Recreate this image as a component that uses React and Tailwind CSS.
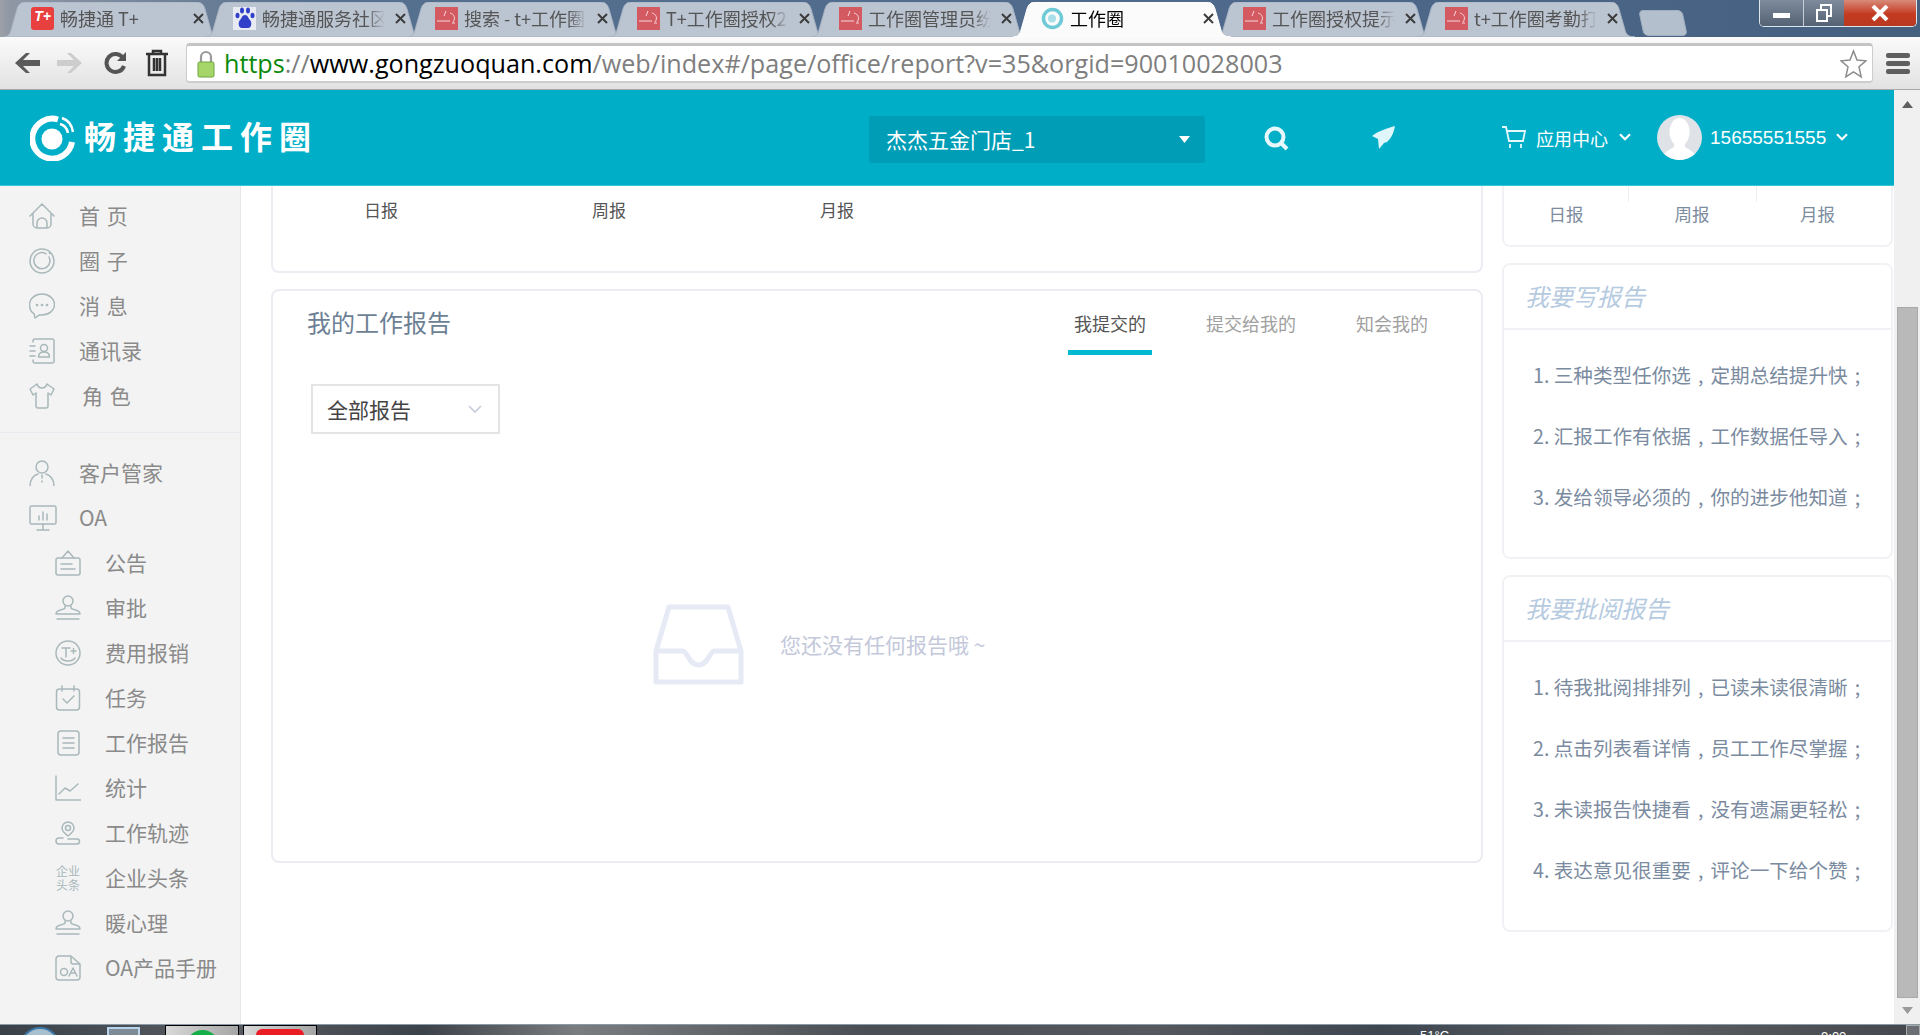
const S = ({ children, w = 26, h = 26, vb = "0 0 26 26", c = "#a9b8ba", sw = 1.5 }) => (
  <svg width={w} height={h} viewBox={vb} fill="none" stroke={c} strokeWidth={sw} strokeLinecap="round" strokeLinejoin="round" className="shrink-0">{children}</svg>
);

const icons = {
  home: <S><path d="M1 13 13 1l12 12M4 11v10a4 4 0 0 0 4 4h10a4 4 0 0 0 4-4V11M8 25v-5a5 5 0 0 1 10 0v5" /></S>,
  circle: <S><circle cx="13" cy="13" r="12" /><path d="M20 9a8 8 0 1 1-3-3.200" /><circle cx="21" cy="5" r=".6" /></S>,
  chat: <S><path d="M13 1c7 0 12.500 4.700 12.500 10.500S20 22 13 22c-1 0-1.500 0-2.500-.2L6 25c-.5-1.500-.5-3-.8-4.200C2 19 .5 15.500.5 11.500.5 5.700 6 1 13 1Z" /><circle cx="8" cy="12" r=".6" /><circle cx="13" cy="12" r=".6" /><circle cx="18" cy="12" r=".6" /></S>,
  book: <S><path d="M4 4V3a2 2 0 0 1 2-2h17a2 2 0 0 1 2 2v20a2 2 0 0 1-2 2H6a2 2 0 0 1-2-2v-1M1 8h5M1 13h5M1 18h5" /><circle cx="15" cy="10" r="3.500" /><path d="M9.500 19c0-3 2-5 5.500-5s5.500 2 5.500 5Z" /></S>,
  shirt: <S><path d="M8 1 1 6l3 6 3-2v13a2 2 0 0 0 2 2h8a2 2 0 0 0 2-2V10l3 2 3-6-7-5c-1 3-3 4-5 4S9 4 8 1Z" /></S>,
  person: <S><circle cx="13" cy="7" r="6" /><path d="M1 26c0-7 4-11 8-12M25 26c0-7-4-11-8-12M13 15v3M13 21v1" /></S>,
  monitor: <S w={28} vb="0 0 28 26"><rect x="1" y="1" width="26" height="18" rx="1.500" /><path d="M14 19v6M8 25h12M10 15v-4M14 15V7M18 15v-6" /></S>,
  notice: <S><rect x="1" y="8" width="24" height="17" rx="2" /><path d="M7 8 13 1l6 7M6 14h11M6 19h14" /></S>,
  stamp: <S><circle cx="13" cy="6" r="5" /><path d="M10 11v2c0 2-9 1-9 6h24c0-5-9-4-9-6v-2M2 24h22" /></S>,
  tplus: <S><circle cx="13" cy="13" r="12" /><path d="M7 8h8M11 8v9M16 11h5M18.500 8.500v5M6 18c3 4 11 4 14 0" /></S>,
  task: <S><rect x="1.500" y="4" width="23" height="21" rx="3" /><path d="M7 1v5M19 1v5M8 14l4 4 7-7" /></S>,
  report: <S><rect x="3" y="1" width="21" height="24" rx="3" /><path d="M8 8h11M8 13h11M8 18h11" /></S>,
  chart: <S><path d="M1 1v24h25M4 19l6-6 5 3 8-7" /></S>,
  pin: <S><path d="M13 16c-4-3-6-5-6-8a6 6 0 1 1 12 0c0 3-2 5-6 8Z" /><circle cx="13" cy="8" r="2.500" /><path d="M8 18H4a3 3 0 0 0 0 6h18a2.500 2.500 0 0 0 0-5h-9" /></S>,
  oa: <S><path d="M16 1H4a3 3 0 0 0-3 3v18a3 3 0 0 0 3 3h18a3 3 0 0 0 3-3V9Zm0 0v6a2 2 0 0 0 2 2h7" /><circle cx="9" cy="17" r="3.500" /><path d="m14 21 4-8 4 8M15.500 18h5" /></S>,
};

const MenuRow = ({ icon, label, sub, extra }) => (
  <div className={`flex h-[45px] items-center ${sub ? "pl-[55px] gap-[24px]" : "pl-[29px] gap-[24px]"}`}>
    {icon}
    <span className={`whitespace-nowrap text-[21px] leading-none text-[#8a8a8a] [word-spacing:2px] ${extra || ""}`}>{label}</span>
  </div>
);

const FaviconRed = () => (
  <div className="w-[23px] h-[23px] shrink-0 bg-[#d45a62] flex items-center justify-center">
    <svg width="21" height="16" viewBox="0 0 21 16" fill="none" stroke="#f6d8da" strokeWidth="1"><path d="M1 11h13M14 3c4 1 6 5 3 9M10 1 8 6M16 13h3" /></svg>
  </div>
);

const FaviconT = () => (
  <div className="w-[23px] h-[23px] shrink-0 rounded-[3px] bg-[#e8403e] flex items-start justify-center text-white text-[14px] font-bold italic leading-[19px] [font-family:'Liberation_Sans',sans-serif]">T+</div>
);

const FaviconBaidu = () => (
  <div className="w-[23px] h-[23px] shrink-0 bg-[#e8ebf2] flex items-center justify-center">
    <svg width="20" height="22" viewBox="0 0 20 22" fill="#3040c8"><ellipse cx="7" cy="3.500" rx="2" ry="3" /><ellipse cx="13" cy="3.500" rx="2" ry="3" /><ellipse cx="2.500" cy="8.500" rx="2" ry="2.800" /><ellipse cx="17.500" cy="8.500" rx="2" ry="2.800" /><path d="M10 8c-3 0-3 3-5 5s-2 8 2 8h6c4 0 4-6 2-8s-2-5-5-5Z" /></svg>
  </div>
);

const FaviconApp = () => (
  <svg width="23" height="23" viewBox="0 0 23 23" fill="none" className="shrink-0"><circle cx="11.500" cy="11.500" r="9" stroke="#6ecad6" strokeWidth="3.500" /><circle cx="11" cy="11.500" r="4" fill="#a9dfe7" /></svg>
);

const tabs = [
  { icon: <FaviconT />, t: "畅捷通 T+" },
  { icon: <FaviconBaidu />, t: "畅捷通服务社区" },
  { icon: <FaviconRed />, t: "搜索 - t+工作圈" },
  { icon: <FaviconRed />, t: "T+工作圈授权2" },
  { icon: <FaviconRed />, t: "工作圈管理员纷" },
  { icon: <FaviconApp />, t: "工作圈", active: true },
  { icon: <FaviconRed />, t: "工作圈授权提示" },
  { icon: <FaviconRed />, t: "t+工作圈考勤打" },
];

const Tab = ({ icon, t, active }) => (
  <div className={`relative w-[202px] h-[35px] shrink-0 flex items-center pl-[20px] pb-[3px] ${active ? "z-10" : ""}`}>
    <svg width="218" height="35" viewBox="0 0 218 35" className="absolute left-[-8px] top-0">
      <path d="M0 35c5 0 7-3 8-7l6-21c1-4 4-7 8-7h172c4 0 7 3 8 7l6 21c1 4 3 7 10 7Z" fill={active ? "#fbfbfb" : "#bbc4d1"} stroke={active ? "#ffffff" : "#a7b2c2"} strokeWidth="1" />
    </svg>
    <div className="relative flex items-center w-full">
      {icon}
      <span className={`ml-[6px] w-[123px] overflow-hidden whitespace-nowrap text-[18px] leading-[24px] [mask-image:linear-gradient(90deg,#000_85%,transparent)] ${active ? "text-black" : "text-[#555]"}`}>{t}</span>
      <svg width="11" height="11" viewBox="0 0 11 11" stroke="#3c3c3c" strokeWidth="2" className="ml-[10px] shrink-0"><path d="m1 1 9 9M10 1l-9 9" /></svg>
    </div>
  </div>
);

const Title = ({ children }) => (
  <div className="h-[65px] border-b-2 border-[#f1f2f5] pl-[21px] pb-[2px] flex items-center">
    <span className="italic text-[24px] leading-none text-[#b6cae0]">{children}</span>
  </div>
);

const Line = ({ n, a, b }) => (
  <div className="h-[61px] leading-[61px] whitespace-nowrap text-[19.6px] text-[#7b8b9f]">
    {n}. {a}<span className="inline-block w-[19.600px] text-center">,</span>{b}<span className="inline-block w-[19.600px] text-center">;</span>
  </div>
);

const Tip = ({ title, items }) => (
  <div className="mt-[16px] rounded-[8px] border-2 border-[#f1f2f5] bg-white">
    <Title>{title}</Title>
    <div className="pt-[14px] pb-[30px] pl-[29px]">
      {items.map((x, i) => <Line key={i} n={i + 1} a={x[0]} b={x[1]} />)}
    </div>
  </div>
);

const Chevron = ({ c = "#fff", w = 12 }) => (
  <svg width={w} height={w * 0.7} viewBox="0 0 12 8" fill="none" stroke={c} strokeWidth="2.200"><path d="m1 1 5 5 5-5" /></svg>
);

export default function App() {
  return (
    <div className="w-[1920px] h-[1035px] overflow-hidden flex flex-col bg-white [font-family:'Noto_Sans_CJK_SC','Noto_Sans',sans-serif]">
      {/* tab strip */}
      <div className="h-[37px] shrink-0 flex items-start justify-between bg-[linear-gradient(90deg,#9da1a8_0,#8f97a5_10px,#56708f_16%,#4f6a8c_60%,#45607f_100%)] overflow-hidden">
        <div className="flex pt-[2px] pl-[11px]">
          {tabs.map((t, i) => <Tab key={i} {...t} />)}
          <div className="ml-[14px] mt-[8px] w-[44px] h-[26px] rounded-[5px] skew-x-[12deg] bg-[#b4bfce] border border-[#a3afc0]" />
        </div>
        <div className="mr-[3px] flex h-[27px] w-[158px] rounded-b-[5px] border border-t-0 border-[#dfe5ec] overflow-hidden">
          <div className="w-[44px] flex items-end justify-center pb-[8px] bg-[linear-gradient(180deg,#7f8b9c,#536274)] border-r border-[#c5ccd5]"><div className="w-[17px] h-[5px] bg-white" /></div>
          <div className="w-[40px] flex items-center justify-center bg-[linear-gradient(180deg,#7f8b9c,#536274)]">
            <svg width="18" height="18" viewBox="0 0 18 18" fill="none" stroke="#fff" strokeWidth="2"><rect x="2" y="6" width="10" height="11" /><path d="M6 5V1h10v11h-3" /></svg>
          </div>
          <div className="flex-1 flex items-center justify-center bg-[linear-gradient(180deg,#d88a7a,#c43a20_55%,#b93a22)]">
            <svg width="20" height="16" viewBox="0 0 20 16" stroke="#fff" strokeWidth="4"><path d="m3 1 14 14M17 1 3 15" /></svg>
          </div>
        </div>
      </div>

      {/* browser toolbar */}
      <div className="h-[53px] shrink-0 flex items-center border-b border-[#a8a8a8] bg-[linear-gradient(180deg,#fafafa,#ececec_60%,#e2e2e2)]">
        <div className="ml-[15px] flex items-center">
          <svg width="25" height="22" viewBox="0 0 25 22" fill="#5b5b5b"><path d="M0 11 11 1h4l-7 7h17v6H8l7 7h-4Z" /></svg>
          <svg width="25" height="22" viewBox="0 0 25 22" fill="#cdcdcd" className="ml-[17px]"><path d="M25 11 14 1h-4l7 7H0v6h17l-7 7h4Z" /></svg>
          <svg width="23" height="24" viewBox="0 0 23 24" fill="none" stroke="#555" strokeWidth="4" className="ml-[22px]"><path d="M19 7a9 9 0 1 0 1 8" /><path d="M22 1v9h-9Z" fill="#555" stroke="none" /></svg>
          <svg width="24" height="28" viewBox="0 0 24 28" fill="none" stroke="#333" strokeWidth="2.500" className="ml-[18px]"><path d="M1 5h22M8 5V2h8v3M4 5v21h16V5M9 9v13M12 9v13M15 9v13" /></svg>
        </div>
        <div className="ml-[17px] w-[1687px] h-[40px] flex items-center rounded-[4px] border border-[#cdcdcd] border-t-[3px] border-t-[#c4c4c4] border-b-2 bg-white">
          <svg width="18" height="28" viewBox="0 0 18 28" className="ml-[10px] shrink-0"><path d="M4 12V7a5 5 0 0 1 10 0v5" fill="none" stroke="#9a9a9a" strokeWidth="2.200" /><rect x="1" y="12" width="16" height="15" rx="1.500" fill="#a6d66a" stroke="#6fa53a" /></svg>
          <span className="ml-[9px] whitespace-nowrap text-[25.16px] leading-none text-[#7e7e7e] [font-family:'Open_Sans',sans-serif]">
            <span className="text-[#0a8a0a]">https</span>://<span className="text-black">www.gongzuoquan.com</span>/web/index#/page/office/report?v=35&amp;orgid=90010028003
          </span>
          <svg width="27" height="30" viewBox="0 0 27 30" fill="#fff" stroke="#8c8c8c" strokeWidth="1.500" className="ml-auto mr-[5px] shrink-0"><path d="m13.500 2 3.500 9 9 .8-7 6 2.200 10-7.700-5-7.700 5L8 17.800l-7-6 9-.8Z" /></svg>
        </div>
        <div className="ml-[13px] flex flex-col gap-[3px]">
          <div className="w-[24px] h-[5px] rounded-[2px] bg-[#5e5e5e]" />
          <div className="w-[24px] h-[5px] rounded-[2px] bg-[#5e5e5e]" />
          <div className="w-[24px] h-[5px] rounded-[2px] bg-[#5e5e5e]" />
        </div>
      </div>

      {/* page */}
      <div className="h-[934px] shrink-0 flex">
        <div className="w-[1894px] flex flex-col">
          {/* teal header */}
          <div className="h-[96px] shrink-0 flex items-center bg-[#00aec8] border-b border-[#3cc6da]">
            <svg width="46" height="46" viewBox="0 0 46 46" fill="none" className="ml-[30px] shrink-0">
              <path d="M28 4.500A20 20 0 1 0 42 27" stroke="#fff" strokeWidth="6" />
              <circle cx="22" cy="24" r="10.500" fill="#fff" />
              <path d="M32 3c6 2 10 7 11 14M30 9c4 1 7 4 8 9" stroke="#fff" strokeWidth="2.500" />
            </svg>
            <span className="ml-[8px] mb-[5px] whitespace-nowrap text-[32px] leading-none font-bold tracking-[7px] text-white">畅捷通工作圈</span>
            <div className="ml-[551px] mt-[4px] w-[336px] h-[47px] flex items-center justify-between pl-[17px] pr-[15px] rounded-[2px] bg-[#009db6]">
              <span className="text-[21px] leading-none text-white">杰杰五金门店_1</span>
              <svg width="11" height="7" viewBox="0 0 11 7" fill="#fff"><path d="M0 0h11L5.500 7Z" /></svg>
            </div>
            <svg width="26" height="26" viewBox="0 0 26 26" fill="none" stroke="#e6f8fb" strokeWidth="4" className="ml-[58px]"><circle cx="12" cy="12" r="8.500" /><path d="m18 18 6 6" /></svg>
            <svg width="24" height="25" viewBox="0 0 24 25" className="ml-[83px] mb-[-1px]"><path d="M23 0C16 2 6 5 0 10l6 3 1 10 5-6 3-1c5-4 7-11 8-16Z" fill="#dff6fa" /></svg>
            <svg width="24" height="23" viewBox="0 0 24 23" fill="none" stroke="#e6f8fb" strokeWidth="1.800" className="ml-[106px]"><path d="M0 1h4l3 14h14l2-10H5M8 18v4M19 18v4" /></svg>
            <span className="ml-[10px] whitespace-nowrap text-[18px] leading-none text-white">应用中心</span>
            <span className="ml-[11px]"><Chevron /></span>
            <div className="ml-[26px] w-[45px] h-[45px] rounded-full bg-[#dfe3e8] overflow-hidden flex justify-center shrink-0">
              <svg width="45" height="45" viewBox="0 0 45 45"><ellipse cx="22.500" cy="17" rx="10" ry="14" fill="#fff" /><path d="M17 26v6c-4 3-10 4-12 13h35c-2-9-8-10-12-13v-6Z" fill="#fff" /></svg>
            </div>
            <span className="ml-[8px] whitespace-nowrap text-[19px] leading-none text-white [font-family:'Liberation_Sans',sans-serif]">15655551555</span>
            <span className="ml-[10px]"><Chevron /></span>
          </div>

          {/* sidebar + content */}
          <div className="flex h-[838px]">
            <div className="w-[241px] shrink-0 bg-[#f3f3f3] border-r border-[#e6e6e6]">
              <div className="pt-[7px] pb-[14px] border-b border-[#e9ebf0]">
                <MenuRow icon={icons.home} label="首 页" />
                <MenuRow icon={icons.circle} label="圈 子" />
                <MenuRow icon={icons.chat} label="消 息" />
                <MenuRow icon={icons.book} label="通讯录" />
                <MenuRow icon={icons.shirt} label="角 色" extra="ml-[3px]" />
              </div>
              <div className="pt-[17px]">
                <MenuRow icon={icons.person} label="客户管家" />
                <MenuRow icon={icons.monitor} label="OA" extra="-ml-[2px]" />
                <MenuRow sub icon={icons.notice} label="公告" />
                <MenuRow sub icon={icons.stamp} label="审批" />
                <MenuRow sub icon={icons.tplus} label="费用报销" />
                <MenuRow sub icon={icons.task} label="任务" />
                <MenuRow sub icon={icons.report} label="工作报告" />
                <MenuRow sub icon={icons.chart} label="统计" />
                <MenuRow sub icon={icons.pin} label="工作轨迹" />
                <MenuRow sub icon={<div className="w-[26px] text-center text-[12px] leading-[14px] text-[#a9b8ba]">企业<br />头条</div>} label="企业头条" />
                <MenuRow sub icon={icons.stamp} label="暖心理" />
                <MenuRow sub icon={icons.oa} label="OA产品手册" />
              </div>
            </div>

            <div className="flex-1 bg-white flex pl-[30px]">
              {/* left column */}
              <div className="w-[1212px] shrink-0">
                <div className="h-[87px] rounded-b-[8px] border-2 border-t-0 border-[#ecedf3] pl-[91px] pt-[10px] flex gap-[194px] text-[17px] leading-[28px] text-[#555]">
                  <span>日报</span><span>周报</span><span>月报</span>
                </div>
                <div className="mt-[16px] h-[574px] rounded-[8px] border-2 border-[#ecedf3]">
                  <div className="flex justify-between h-[64px] pr-[47px]">
                    <div className="pl-[34px] pt-[15px] text-[24px] leading-[32px] text-[#6c7f94]">我的工作报告</div>
                    <div className="flex gap-[48px] text-[18px] leading-[26px]">
                      <div className="w-[84px] text-center pt-[19px] h-[64px] border-b-[5px] border-[#00b8d2] text-[#555]">我提交的</div>
                      <div className="w-[102px] text-center pt-[19px] text-[#a0a0a0]">提交给我的</div>
                      <div className="w-[84px] text-center pt-[19px] text-[#a0a0a0]">知会我的</div>
                    </div>
                  </div>
                  <div className="mt-[29px] ml-[38px] w-[189px] h-[50px] border-2 border-[#e4e4e4] flex items-center justify-between pl-[14px] pr-[16px] text-[21px] leading-none text-[#444]">
                    <span>全部报告</span>
                    <svg width="14" height="9" viewBox="0 0 14 9" fill="none" stroke="#c8cbdc" strokeWidth="1.600"><path d="m1 1 6 6 6-6" /></svg>
                  </div>
                  <div className="mt-[170px] ml-[380px] flex items-center gap-[36px]">
                    <svg width="91" height="81" viewBox="0 0 91 81" fill="none" stroke="#e6eaf5" strokeWidth="5" strokeLinejoin="round" className="shrink-0">
                      <path d="M16 3h59l13 44v31H3V47Z" />
                      <path d="M3 47h27c4 0 6 14 15.500 14S57 47 61 47h27" />
                    </svg>
                    <span className="text-[21px] leading-none text-[#c3c8da] whitespace-nowrap">您还没有任何报告哦 ~</span>
                  </div>
                </div>
              </div>

              {/* right column */}
              <div className="ml-[19px] w-[391px] shrink-0">
                <div className="h-[61px] rounded-b-[8px] border-2 border-t-0 border-[#f1f2f5] flex text-[17.500px] leading-[24px] text-[#7c8c9e]">
                  <div className="w-[124px]"><div className="h-[16px]" /><div className="text-center">日报</div></div>
                  <div className="w-[128px]"><div className="h-[16px] border-l border-[#eceef2]" /><div className="text-center">周报</div></div>
                  <div className="w-[135px]"><div className="h-[16px] border-l border-[#eceef2]" /><div className="text-center pr-[12px]">月报</div></div>
                </div>
                <Tip title="我要写报告" items={[["三种类型任你选", "定期总结提升快"], ["汇报工作有依据", "工作数据任导入"], ["发给领导必须的", "你的进步他知道"]]} />
                <Tip title="我要批阅报告" items={[["待我批阅排排列", "已读未读很清晰"], ["点击列表看详情", "员工工作尽掌握"], ["未读报告快捷看", "没有遗漏更轻松"], ["表达意见很重要", "评论一下给个赞"]]} />
              </div>
            </div>
          </div>
        </div>

        {/* scrollbar */}
        <div className="w-[26px] shrink-0 bg-[#f0f0f0] flex flex-col items-center">
          <svg width="11" height="7" viewBox="0 0 11 7" fill="#5f5f5f" className="mt-[11px]"><path d="M0 7h11L5.500 0Z" /></svg>
          <div className="mt-[199px] ml-[1px] w-[21px] h-[691px] bg-[#b9b9b9] border border-[#a9a9a9]" />
          <svg width="11" height="7" viewBox="0 0 11 7" fill="#9a9a9a" className="mt-[9px]"><path d="M0 0h11L5.500 7Z" /></svg>
        </div>
      </div>

      {/* windows taskbar (cut off) */}
      <div className="h-[11px] shrink-0 flex items-start overflow-hidden border-t border-[#8b98a6] bg-[linear-gradient(90deg,#3a4048,#585d63_12%,#3c4249_22%,#7a7d80_30%,#4a4f55_45%,#55585e_60%,#3e4650_72%,#5c5f63_85%,#44484e)]">
        <div className="ml-[20px] mt-[2px] w-[40px] h-[40px] shrink-0 rounded-full border-2 border-[#3e78a8] bg-[#a8bfd0]" />
        <div className="ml-[47px] mt-[2px] w-[33px] h-[20px] shrink-0 border-2 border-[#b8d2ea] bg-[#7d8b96]" />
        <div className="ml-[25px] w-[74px] h-[20px] shrink-0 flex justify-center pt-[4px] border border-black bg-[linear-gradient(90deg,#d8d8d8,#a5a5a5)]"><div className="w-[33px] h-[33px] rounded-full bg-[#16ae48]" /></div>
        <div className="ml-[4px] w-[74px] h-[20px] shrink-0 flex justify-center pt-[3px] border border-black bg-[linear-gradient(90deg,#d8d8d8,#a5a5a5)]"><div className="w-[48px] h-[30px] rounded-[6px] bg-[#ec1c24]" /></div>
        <span className="ml-[1103px] mt-[3px] text-[13px] leading-[15px] text-white whitespace-nowrap [font-family:'Liberation_Sans',sans-serif]">51°C</span>
        <span className="ml-[372px] mt-[4px] text-[13px] leading-[15px] text-white whitespace-nowrap [font-family:'Liberation_Sans',sans-serif]">9:00</span>
        <div className="ml-auto w-[14px] h-[11px] border border-[#aaa] bg-[#6a6f75]" />
      </div>
    </div>
  );
}
